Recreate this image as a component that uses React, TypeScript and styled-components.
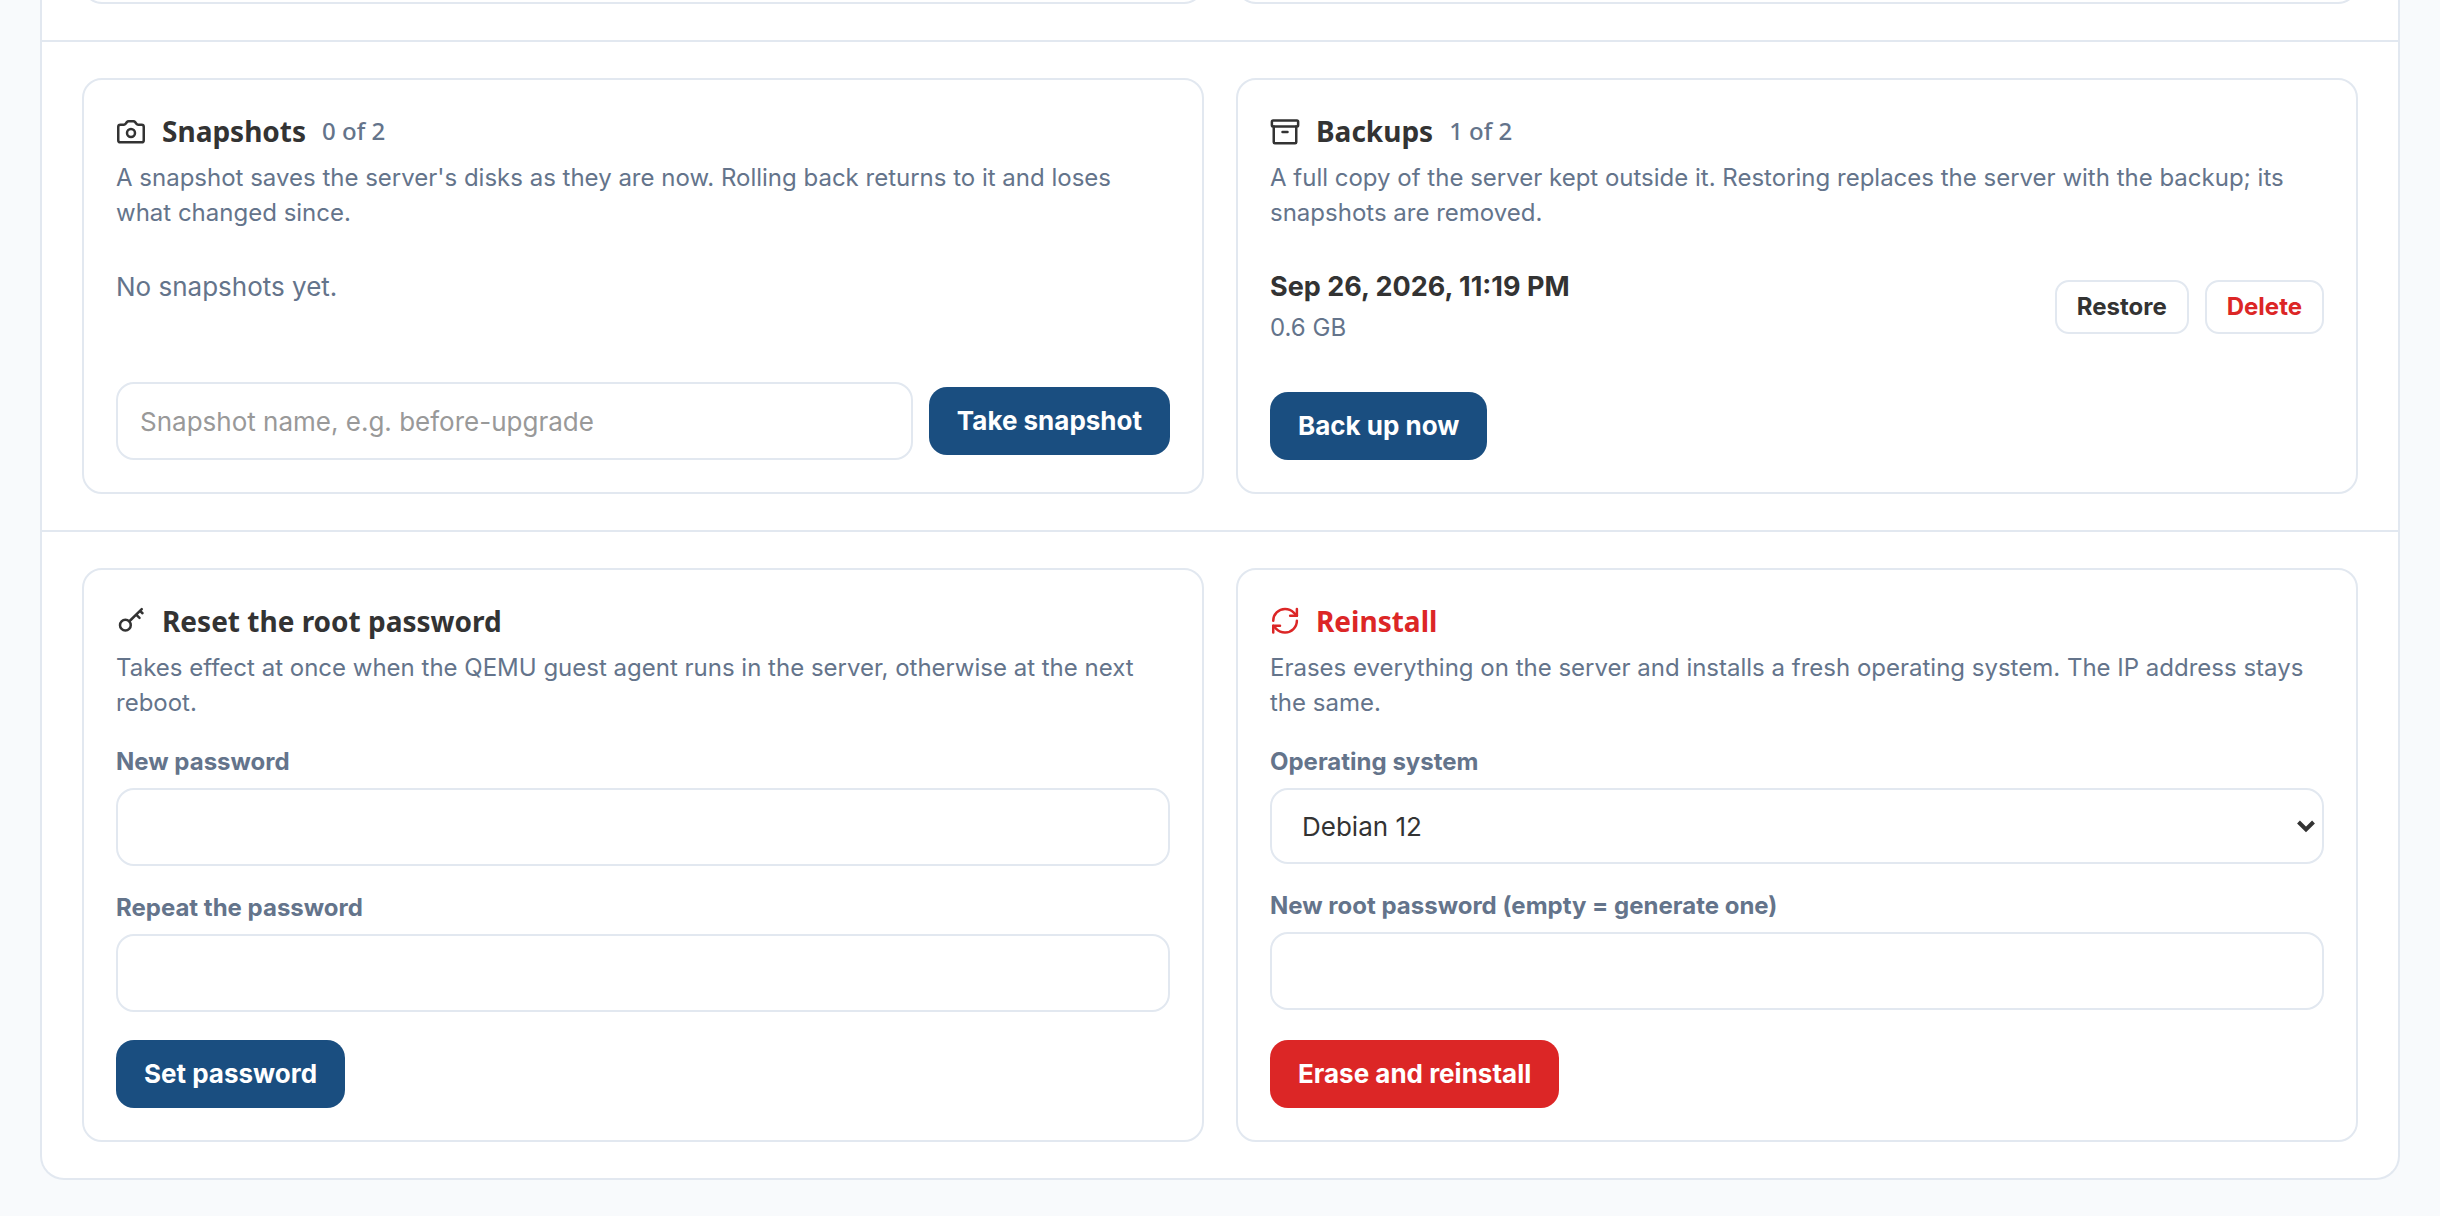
import React from "react";
import styled, { createGlobalStyle } from "styled-components";

const color = {
  page: "#f8fafc",
  surface: "#ffffff",
  line: "#e2e8f0",
  text: "#333333",
  muted: "#64748b",
  placeholder: "#999999",
  primary: "#1a4e80",
  danger: "#dc2626",
};

const bodyFont = `Inter, "Liberation Sans", sans-serif`;
const headingFont = `"Noto Sans", "Open Sans", sans-serif`;

const GlobalStyle = createGlobalStyle`
  *, *::before, *::after { box-sizing: border-box; }
  body {
    margin: 0;
    background: ${color.page};
    color: ${color.text};
    font-family: ${bodyFont};
    font-size: 26px;
  }
  h2, p, ul { margin: 0; padding: 0; }
  button, input, select { font: inherit; margin: 0; }
`;

const Page = styled.main`
  padding: 0 40px 36px;
`;

const Panel = styled.div`
  background: ${color.surface};
  border: 2px solid ${color.line};
  border-top: 0;
  border-radius: 0 0 24px 24px;
`;

const Section = styled.section`
  display: grid;
  grid-template-columns: repeat(2, minmax(0, 1fr));
  gap: 32px;
  padding: 36px 40px;

  & + & {
    border-top: 2px solid ${color.line};
  }
`;

/* Only the lower edge of the previous pair of cards is in view. */
const ScrolledSection = styled(Section)`
  padding-top: 0;
`;

const CardTail = styled.div`
  display: grid;
  align-content: end;
  height: 4px;
  overflow: hidden;

  &::after {
    content: "";
    height: 48px;
    border: 2px solid ${color.line};
    border-radius: 20px;
  }
`;

const Card = styled.article`
  display: flex;
  flex-direction: column;
  padding: 32px;
  border: 2px solid ${color.line};
  border-radius: 20px;
`;

const CardHeader = styled.header<{ $danger?: boolean }>`
  display: flex;
  align-items: center;
  gap: 16px;
  height: 38px;
  color: ${(p) => (p.$danger ? color.danger : color.text)};
  font-family: ${headingFont};
`;

const Title = styled.h2`
  font-size: 28px;
  font-weight: 700;
  line-height: 38px;
`;

const Count = styled.span`
  color: ${color.muted};
  font-size: 24px;
  font-weight: 500;
  line-height: 32px;
`;

const Description = styled.p`
  margin-top: 10px;
  color: ${color.muted};
  font-size: 24px;
  line-height: 35px;
`;

const EmptyText = styled.p`
  padding: 36px 0;
  color: ${color.muted};
  line-height: 42px;
`;

const List = styled.ul`
  padding: 36px 0 44px;
  list-style: none;
`;

const ListItem = styled.li`
  display: flex;
  align-items: center;
  gap: 16px;
`;

const ItemText = styled.div`
  flex: 1;
  display: grid;
  gap: 2px;
  padding-bottom: 2px;
`;

const ItemName = styled.strong`
  font-size: 27px;
  font-weight: 700;
  line-height: 42px;
`;

const ItemMeta = styled.span`
  color: ${color.muted};
  font-size: 24px;
  line-height: 36px;
`;

const SmallButton = styled.button<{ $danger?: boolean }>`
  height: 54px;
  padding: 0 20px 2px;
  border: 2px solid ${color.line};
  border-radius: 14px;
  background: ${color.surface};
  color: ${(p) => (p.$danger ? color.danger : color.text)};
  font-size: 24px;
  font-weight: 700;
  cursor: pointer;
`;

const Button = styled.button<{ $danger?: boolean }>`
  align-self: flex-start;
  height: 68px;
  padding: 0 28px 2px;
  border: 0;
  border-radius: 18px;
  background: ${(p) => (p.$danger ? color.danger : color.primary)};
  color: #ffffff;
  font-weight: 700;
  white-space: nowrap;
  cursor: pointer;
`;

const Input = styled.input`
  flex: 1;
  width: 100%;
  min-width: 0;
  height: 78px;
  padding: 0 22px;
  border: 2px solid ${color.line};
  border-radius: 18px;
  background: ${color.surface};
  color: ${color.text};

  &::placeholder {
    color: ${color.placeholder};
    opacity: 1;
  }
`;

const SnapshotForm = styled.form`
  display: flex;
  align-items: center;
  gap: 16px;
  margin-top: auto;

  ${Button} {
    align-self: center;
  }
`;

const Form = styled.form`
  flex: 1;
  display: flex;
  flex-direction: column;
  justify-content: space-between;
  gap: 28px;
`;

const CardFooter = styled.footer`
  display: flex;
  margin-top: auto;
`;

const Fields = styled.div`
  display: grid;
  gap: 24px;
  padding-top: 24px;
`;

const Field = styled.div`
  display: grid;
`;

const Label = styled.label`
  margin-bottom: 8px;
  color: ${color.muted};
  font-size: 24px;
  font-weight: 700;
  line-height: 36px;
`;

const SelectBox = styled.div`
  position: relative;
`;

const Select = styled.select`
  display: block;
  width: 100%;
  height: 76px;
  padding: 0 48px 0 30px;
  appearance: none;
  border: 2px solid ${color.line};
  border-radius: 18px;
  background: ${color.surface};
  color: ${color.text};
`;

const SelectArrow = styled.svg`
  position: absolute;
  top: 50%;
  right: 8px;
  transform: translateY(-50%);
  pointer-events: none;
`;

const IconSvg = styled.svg`
  flex: none;
  width: 30px;
  height: 30px;
  fill: none;
  stroke: currentColor;
  stroke-width: 2;
  stroke-linecap: round;
  stroke-linejoin: round;
`;

function Icon({ children }: { children: React.ReactNode }) {
  return (
    <IconSvg viewBox="0 0 24 24" aria-hidden="true">
      {children}
    </IconSvg>
  );
}

const CameraIcon = () => (
  <Icon>
    <path d="M3.5 6.9h2.8c.6 0 1-.2 1.4-.7l1-1.3c.4-.5.8-.7 1.4-.7h3.8c.6 0 1 .2 1.4.7l1 1.3c.4.5.8.7 1.4.7h2.8c1 0 1.7.7 1.7 1.7v10.7c0 1-.7 1.7-1.7 1.7H3.5c-1 0-1.7-.7-1.7-1.7V8.6c0-1 .7-1.7 1.7-1.7z" />
    <circle cx="12" cy="13.6" r="3.2" />
  </Icon>
);

const ArchiveIcon = () => (
  <Icon>
    <rect x="1.5" y="3.6" width="21" height="4.8" rx="1" />
    <path d="M3 8.4V20.9c0 .6.3.9.9.9h16.2c.6 0 .9-.3.9-.9V8.4" />
    <path d="M10 12.8h4" />
  </Icon>
);

const KeyIcon = () => (
  <Icon>
    <circle cx="7.5" cy="15.3" r="4.3" />
    <path d="M10.7 12.2 20.6 2.5M16.1 6.9l2.7 2.6M19.2 3.9l2 1.9" />
  </Icon>
);

const RefreshIcon = () => (
  <Icon>
    <path d="M2.6 11.8A9.4 9.4 0 0 1 12 2.4a9.8 9.8 0 0 1 7 2.9l2.5 2.5" />
    <path d="M21.5 2.4v5.4h-5.4" />
    <path d="M21.5 11.8A9.4 9.4 0 0 1 12 21.2a9.8 9.8 0 0 1-7-2.9l-2.4-2.5" />
    <path d="M8 15.8H2.6v5.4" />
  </Icon>
);

const stop = (e: React.FormEvent) => e.preventDefault();

export default function App() {
  return (
    <Page>
      <GlobalStyle />
      <Panel>
        <ScrolledSection aria-hidden="true">
          <CardTail />
          <CardTail />
        </ScrolledSection>

        <Section>
          <Card>
            <CardHeader>
              <CameraIcon />
              <Title>Snapshots</Title>
              <Count>0 of 2</Count>
            </CardHeader>
            <Description>
              A snapshot saves the server's disks as they are now. Rolling back returns to it and
              loses what changed since.
            </Description>
            <EmptyText>No snapshots yet.</EmptyText>
            <SnapshotForm onSubmit={stop}>
              <Input
                type="text"
                aria-label="Snapshot name"
                placeholder="Snapshot name, e.g. before-upgrade"
              />
              <Button type="submit">Take snapshot</Button>
            </SnapshotForm>
          </Card>

          <Card>
            <CardHeader>
              <ArchiveIcon />
              <Title>Backups</Title>
              <Count>1 of 2</Count>
            </CardHeader>
            <Description>
              A full copy of the server kept outside it. Restoring replaces the server with the
              backup; its snapshots are removed.
            </Description>
            <List>
              <ListItem>
                <ItemText>
                  <ItemName>Sep 26, 2026, 11:19 PM</ItemName>
                  <ItemMeta>0.6 GB</ItemMeta>
                </ItemText>
                <SmallButton type="button">Restore</SmallButton>
                <SmallButton type="button" $danger>
                  Delete
                </SmallButton>
              </ListItem>
            </List>
            <CardFooter>
              <Button type="button">Back up now</Button>
            </CardFooter>
          </Card>
        </Section>

        <Section>
          <Card>
            <CardHeader>
              <KeyIcon />
              <Title>Reset the root password</Title>
            </CardHeader>
            <Description>
              Takes effect at once when the QEMU guest agent runs in the server, otherwise at the
              next reboot.
            </Description>
            <Form onSubmit={stop}>
              <Fields>
                <Field>
                  <Label htmlFor="new-password">New password</Label>
                  <Input id="new-password" type="password" />
                </Field>
                <Field>
                  <Label htmlFor="repeat-password">Repeat the password</Label>
                  <Input id="repeat-password" type="password" />
                </Field>
              </Fields>
              <Button type="submit">Set password</Button>
            </Form>
          </Card>

          <Card>
            <CardHeader $danger>
              <RefreshIcon />
              <Title>Reinstall</Title>
            </CardHeader>
            <Description>
              Erases everything on the server and installs a fresh operating system. The IP address
              stays the same.
            </Description>
            <Form onSubmit={stop}>
              <Fields>
                <Field>
                  <Label htmlFor="os">Operating system</Label>
                  <SelectBox>
                    <Select id="os" defaultValue="debian-12">
                      <option value="debian-12">Debian 12</option>
                    </Select>
                    <SelectArrow width="20" height="14" viewBox="0 0 20 14" aria-hidden="true">
                      <path d="M2.5 3 10 10.5 17.5 3" fill="none" stroke={color.text} strokeWidth="4" />
                    </SelectArrow>
                  </SelectBox>
                </Field>
                <Field>
                  <Label htmlFor="root-password">New root password (empty = generate one)</Label>
                  <Input id="root-password" type="password" />
                </Field>
              </Fields>
              <Button type="submit" $danger>
                Erase and reinstall
              </Button>
            </Form>
          </Card>
        </Section>
      </Panel>
    </Page>
  );
}
